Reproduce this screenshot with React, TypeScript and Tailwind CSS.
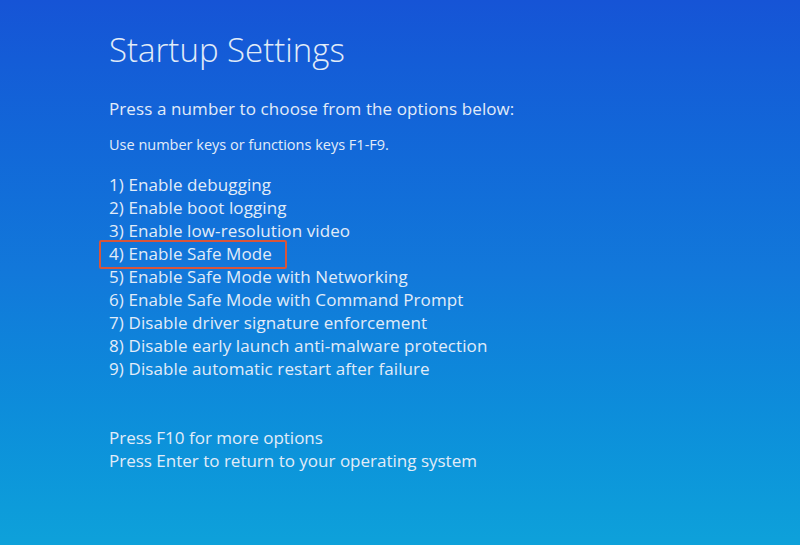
const OPTIONS = [
  "1) Enable debugging",
  "2) Enable boot logging",
  "3) Enable low-resolution video",
  "4) Enable Safe Mode",
  "5) Enable Safe Mode with Networking",
  "6) Enable Safe Mode with Command Prompt",
  "7) Disable driver signature enforcement",
  "8) Disable early launch anti-malware protection",
  "9) Disable automatic restart after failure",
];

export default function App() {
  return (
    <div
      className="w-[800px] h-[545px] overflow-hidden bg-gradient-to-b from-[#1654d6] via-[#1278da] to-[#0ea1da] text-[#e2ecf8] pl-[109px] pt-[30px]"
      style={{ fontFamily: '"Open Sans", "Noto Sans", sans-serif' }}
    >
      <h1 className="text-[33px] font-light leading-[40px]">Startup Settings</h1>

      <p className="mt-[27px] text-[17px] leading-[23px] tracking-[0.1px]">
        Press a number to choose from the options below:
      </p>
      <p className="mt-[15px] text-[14.5px] leading-[20px]">
        Use number keys or functions keys F1-F9.
      </p>

      <ul className="mt-[18px] text-[17px] leading-[23px] tracking-[0.1px]">
        {OPTIONS.map((opt, i) => (
          <li key={opt} className="relative">
            {i === 3 && (
              <span className="absolute left-[-10px] top-[-2px] w-[188px] h-[29px] border-2 border-[#d9553a] rounded-[2px]" />
            )}
            {opt}
          </li>
        ))}
      </ul>

      <div className="mt-[46px] text-[17px] leading-[23px]">
        <p>Press F10 for more options</p>
        <p>Press Enter to return to your operating system</p>
      </div>
    </div>
  );
}
